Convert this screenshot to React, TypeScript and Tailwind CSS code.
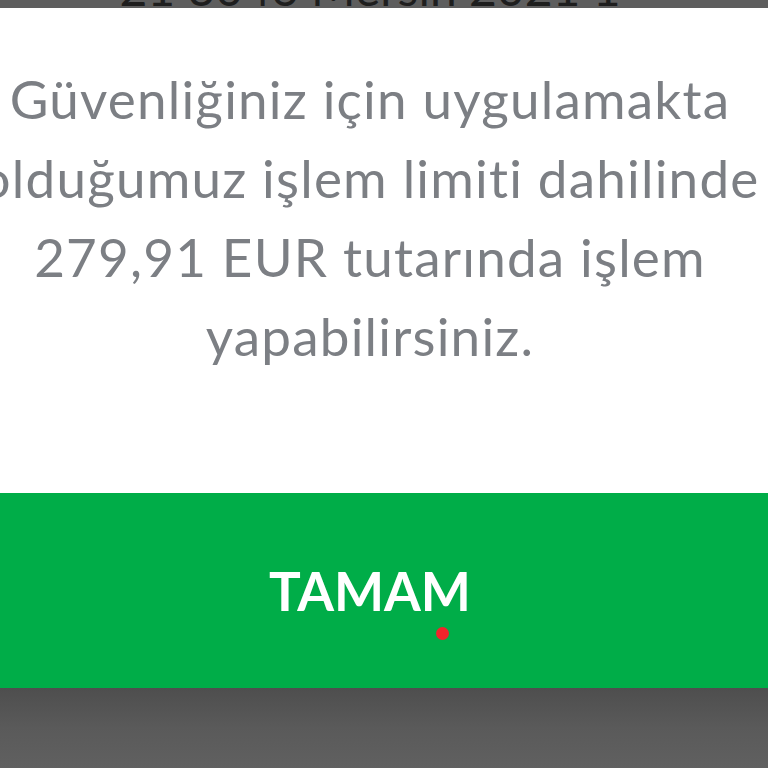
export default function App() {
  const lines = [
    "Güvenliğiniz için uygulamakta",
    "olduğumuz işlem limiti dahilinde",
    "279,91 EUR tutarında işlem",
    "yapabilirsiniz.",
  ];

  return (
    <div className="flex h-[768px] w-[768px] flex-col overflow-hidden bg-white" style={{ fontFamily: "Lato, 'Open Sans', sans-serif" }}>
      {/* cut-off header behind the dialog */}
      <div className="relative h-[8px] overflow-hidden bg-[#5e5e5e]">
        <div className="absolute left-0 right-[28px] top-[-36px] flex justify-center whitespace-nowrap text-[48px] leading-[48px] text-[#1e1e1e]">
          21 3046 Mersin 2021 1
        </div>
      </div>

      <div className="flex flex-1 flex-col items-center pr-[28px] pt-[51px] text-[53px] leading-[79px] tracking-[1.2px] text-[#7c7f84]">
        {lines.map((l) => (
          <div key={l} className="flex w-full justify-center whitespace-nowrap">
            {l}
          </div>
        ))}
      </div>

      <div className="relative flex h-[195px] items-center justify-center bg-[#00ad48] pr-[28px]">
        <span className="text-[53px] font-bold text-white">TAMAM</span>
        <span className="absolute left-[436px] top-[134px] h-[13px] w-[13px] rounded-full bg-[#f2232b]" />
      </div>

      <div className="h-[80px] bg-gradient-to-b from-[#4e4e4e] via-[#5a5a5a] to-[#606060]" />
    </div>
  );
}
